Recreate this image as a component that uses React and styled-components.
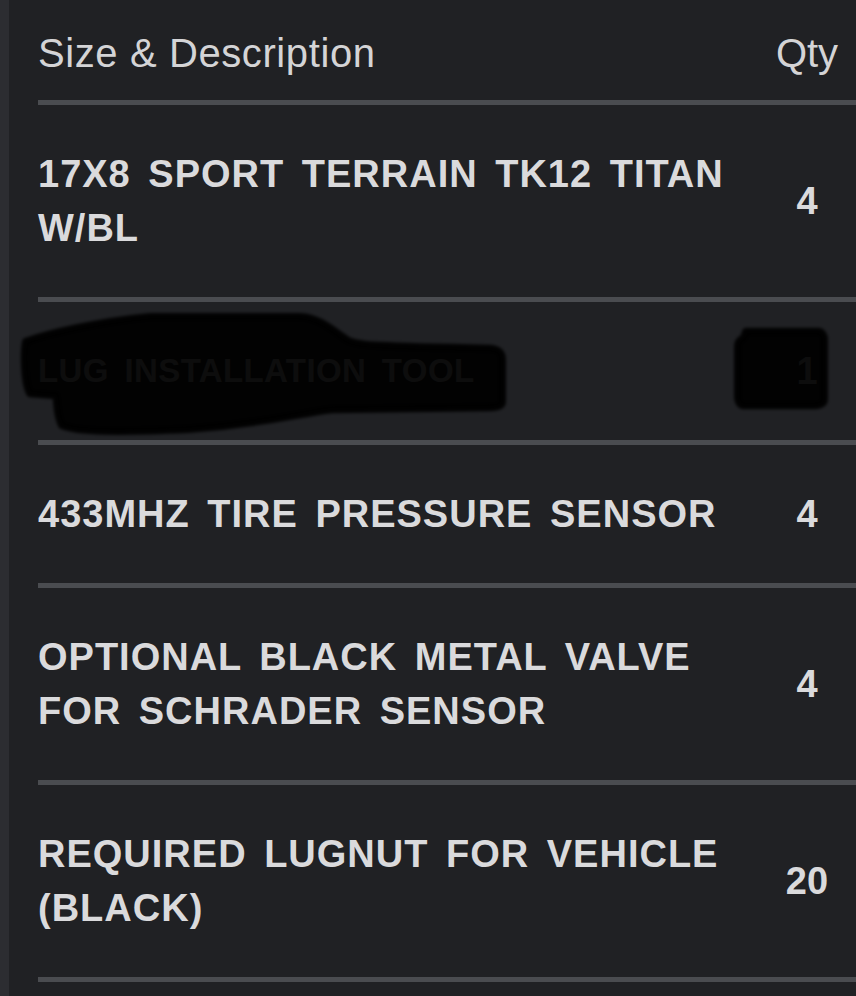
import React from 'react';
import styled, { createGlobalStyle } from 'styled-components';

const GlobalStyle = createGlobalStyle`
  html, body {
    margin: 0;
    padding: 0;
    background: #202124;
  }
  body {
    font-family: "Liberation Sans", Arial, sans-serif;
  }
`;

const Page = styled.div`
  display: flex;
  min-height: 996px;
  background: #202124;
  overflow: hidden;
`;

const SideStrip = styled.div`
  width: 9px;
  flex-shrink: 0;
  background: #2c2d31;
`;

const Table = styled.div`
  flex: 1;
  margin-left: 29px;
  display: flex;
  flex-direction: column;
`;

const Row = styled.div`
  position: relative;
  display: grid;
  grid-template-columns: 1fr 98px;
  align-items: center;
  border-bottom: 5px solid #4a4c50;
  padding: ${({ $head }) => ($head ? '26px 0 20px' : '42px 0 42px')};
`;

const HeadCell = styled.div`
  font-size: 40px;
  line-height: 54px;
  letter-spacing: ${({ $center }) => ($center ? '0' : '0.6px')};
  color: #d4d4d6;
  text-align: ${({ $center }) => ($center ? 'center' : 'left')};
`;

const DescCell = styled.div`
  font-size: ${({ $hidden }) => ($hidden ? '33px' : '38px')};
  line-height: 54px;
  font-weight: 700;
  color: #dadadc;
  word-spacing: 6px;
  letter-spacing: ${({ $hidden }) => ($hidden ? '0.4px' : '1px')};
  padding-right: 20px;
`;

const QtyCell = styled.div`
  font-size: 38px;
  line-height: 54px;
  font-weight: 700;
  color: #dadadc;
  text-align: center;
`;

const Redaction = styled.svg`
  position: absolute;
  left: 0;
  top: 0;
  width: 100%;
  height: 100%;
  overflow: visible;
  pointer-events: none;
`;

const items = [
  { desc: '17X8 SPORT TERRAIN TK12 TITAN W/BL', qty: '4' },
  { desc: 'LUG INSTALLATION TOOL', qty: '1', hidden: true },
  { desc: '433MHZ TIRE PRESSURE SENSOR', qty: '4' },
  { desc: 'OPTIONAL BLACK METAL VALVE FOR SCHRADER SENSOR', qty: '4' },
  { desc: 'REQUIRED LUGNUT FOR VEHICLE (BLACK)', qty: '20' },
];

const Scribble = () => (
  <Redaction viewBox="0 0 818 139" preserveAspectRatio="none">
    <defs>
      <filter id="soft" x="-10%" y="-30%" width="120%" height="160%">
        <feGaussianBlur stdDeviation="1.6" />
      </filter>
    </defs>
    <g filter="url(#soft)" fill="#040405" fillOpacity="0.94" stroke="#040405" strokeOpacity="0.94" strokeWidth="8" strokeLinejoin="round">
      <path d="M-12 40 C10 32 60 20 112 15 L262 15 C282 16 296 30 310 39 C320 44 340 45 452 47 C462 48 464 52 464 58 L464 100 C464 104 460 106 452 106 L294 108 C260 112 230 122 150 128 C80 131 40 131 24 124 C18 112 20 100 18 94 L-8 92 C-14 80 -14 50 -12 40 Z" />
      <path d="M708 30 L780 30 C784 30 786 34 786 38 L786 98 C786 102 782 104 778 104 L706 104 C702 104 700 100 700 96 L700 44 C700 40 702 38 706 36 Z" />
    </g>
  </Redaction>
);

export default function App() {
  return (
    <Page>
      <GlobalStyle />
      <SideStrip />
      <Table>
        <Row $head>
          <HeadCell>Size &amp; Description</HeadCell>
          <HeadCell $center>Qty</HeadCell>
        </Row>
        {items.map(item => (
          <Row key={item.desc}>
            <DescCell $hidden={item.hidden}>{item.desc}</DescCell>
            <QtyCell>{item.qty}</QtyCell>
            {item.hidden && <Scribble />}
          </Row>
        ))}
      </Table>
    </Page>
  );
}
